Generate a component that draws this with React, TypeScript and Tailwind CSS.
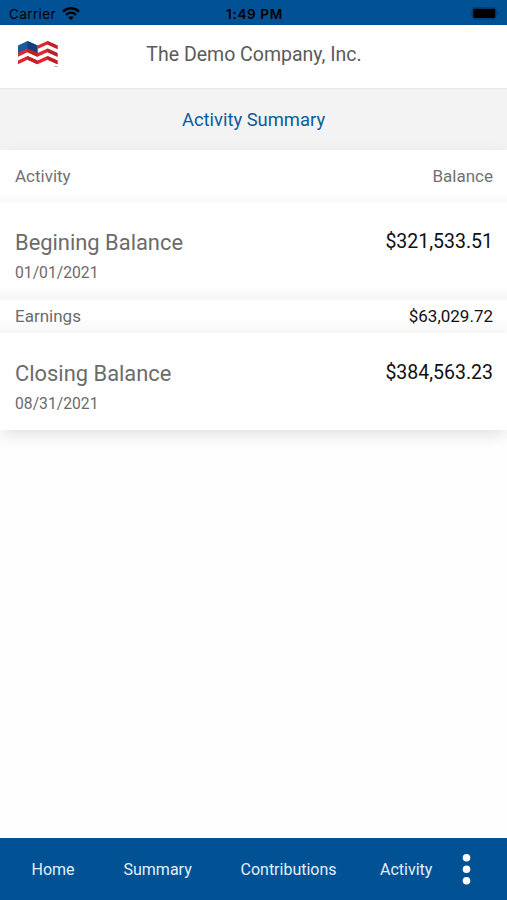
import React from 'react';

interface BalanceRowProps {
  title: string;
  date: string;
  amount: string;
}

const navItems = [
  { label: 'Home', className: 'ml-[31.5px] w-[92px]' },
  { label: 'Summary', className: 'w-[117px]' },
  { label: 'Contributions', className: 'w-[139.5px]' },
  { label: 'Activity', className: 'w-[82px]' }
];

const FlagLogo = () => <svg width="42" height="28" viewBox="0 0 42 28" aria-label="Company logo">
    <path d="M1 5.5 10.5 1 20.5 5.5V14L10.5 9 1 13.5Z" fill="#1b5a9d" />
    <path d="M10.5 1 20.5 5.5V14L10.5 9Z" fill="#103f7c" />
    <path d="M20.5 5.5 30.5 1 40.5 5.5V9L30.5 4.5 20.5 9Z" fill="#dc2730" />
    <path d="M1 13 10.5 8.5 20.5 13 30.5 8.5 40.5 13V16.7L30.5 12.2 20.5 16.7 10.5 12.2 1 16.7Z" fill="#dc2730" />
    <path d="M1 20.5 10.5 16 20.5 20.5 30.5 16 40.5 20.5V24.2L30.5 19.7 20.5 24.2 10.5 19.7 1 24.2Z" fill="#dc2730" />
    <path d="M10.5 8.5 20.5 13V16.7L10.5 12.2ZM10.5 16 20.5 20.5V24.2L10.5 19.7ZM30.5 1 40.5 5.5V9L30.5 4.5ZM30.5 8.5 40.5 13V16.7L30.5 12.2ZM30.5 16 40.5 20.5V24.2L30.5 19.7Z" fill="#be2029" />
    <path d="M37.5 26.5h3" stroke="#aaa" strokeWidth="1" />
  </svg>;

const WifiIcon = () => <svg width="18" height="14" viewBox="0 0 18 14" fill="none" stroke="#000" strokeWidth="2.4">
    <path d="M1 4.6C5.6.2 12.4.2 17 4.6" />
    <path d="M4 7.8c3-2.7 7-2.7 10 0" />
    <path d="M9 13 6.2 10.2c1.7-1.4 3.9-1.4 5.6 0Z" fill="#000" stroke="none" />
  </svg>;

const BatteryIcon = () => <svg width="28" height="14" viewBox="0 0 28 14">
    <rect x="1" y=".6" width="24" height="11.5" rx="3.2" fill="none" stroke="#003b6d" strokeWidth="1.2" />
    <rect x="2.2" y="1.8" width="22" height="9.2" rx="1.5" fill="#000" />
    <path d="M26.3 4.1c1.5.7 1.5 3.8 0 4.5Z" fill="#003b6d" />
  </svg>;

const BalanceRow: React.FC<BalanceRowProps> = ({ title, date, amount }) => {
  return <div className="flex justify-between pr-[14px] pl-[15px] text-[#6b6b6b]">
      <div>
        <div className="text-[21.9px] leading-[28px]">{title}</div>
        <div className="mt-[6px] text-[15.7px] leading-[20px]">{date}</div>
      </div>
      <div className="text-[19.5px] leading-[26px] text-[#111]">{amount}</div>
    </div>;
};

export default function App() {
  return <div className="flex h-[900px] w-[507px] flex-col overflow-hidden bg-[#fefefe] font-['Roboto',sans-serif]">
      {/* Status bar */}
      <div className="grid h-[25px] shrink-0 grid-cols-3 items-center bg-[#005295] pt-[3px] font-['Inter',sans-serif] text-[13.6px] text-black">
        <div className="flex items-center gap-[6px] pl-[9px]">
          <span className="tracking-[0.35px]">Carrier</span>
          <WifiIcon />
        </div>
        <span className="pl-[2px] text-center font-semibold tracking-[0.6px]">1:49 PM</span>
        <div className="flex justify-end pr-[8px]"><BatteryIcon /></div>
      </div>

      {/* Header */}
      <header className="grid h-[64px] shrink-0 grid-cols-[80px_1fr_80px] items-center border-b border-[#e7e7e7] bg-white">
        <div className="pb-[5px] pl-[17px]"><FlagLogo /></div>
        <h1 className="pb-[3px] pl-px text-center text-[19.5px] leading-[26px] text-[#5b5b5b]">The Demo Company, Inc.</h1>
      </header>

      <div className="flex h-[61px] shrink-0 items-center justify-center bg-[#f3f3f3] text-[18.4px] text-[#0c5b9c]">Activity Summary</div>

      {/* Activity */}
      <main className="flex-1">
        <section className="relative h-[280px] bg-white shadow-[0_6px_16px_-2px_rgba(0,0,0,0.13)]">
          <div className="flex h-[52px] items-center justify-between bg-gradient-to-b from-white from-85% to-[#f8f8f8] pt-px pr-[14px] pl-[15px] text-[17px] text-[#717171]">
            <span>Activity</span>
            <span>Balance</span>
          </div>
          <div className="h-[98px] bg-gradient-to-b from-white from-85% to-[#f5f5f5] pt-[27px]">
            <BalanceRow title="Begining Balance" date="01/01/2021" amount="$321,533.51" />
          </div>
          <div className="flex h-[33px] items-center justify-between bg-gradient-to-b from-white from-50% to-[#f8f8f8] pr-[14px] pl-[15px] text-[17px] text-[#6b6b6b]">
            <span>Earnings</span>
            <span className="text-[#111]">$63,029.72</span>
          </div>
          <div className="h-[97px] bg-white pt-[26.5px]">
            <BalanceRow title="Closing Balance" date="08/31/2021" amount="$384,563.23" />
          </div>
        </section>
      </main>

      {/* Bottom navigation */}
      <nav className="flex h-[62px] shrink-0 items-center bg-[#005295] text-[16px] text-[#e3effa]">
        {navItems.map(item => <button key={item.label} className={`${item.className} pt-[2px] text-left`}>{item.label}</button>)}
        <button aria-label="More">
          <svg width="10" height="32" viewBox="0 0 10 32" fill="#fff">
            <circle cx="4.5" cy="4.7" r="3.8" />
            <circle cx="4.5" cy="16.2" r="3.8" />
            <circle cx="4.5" cy="27.7" r="3.8" />
          </svg>
        </button>
      </nav>
    </div>;
}
